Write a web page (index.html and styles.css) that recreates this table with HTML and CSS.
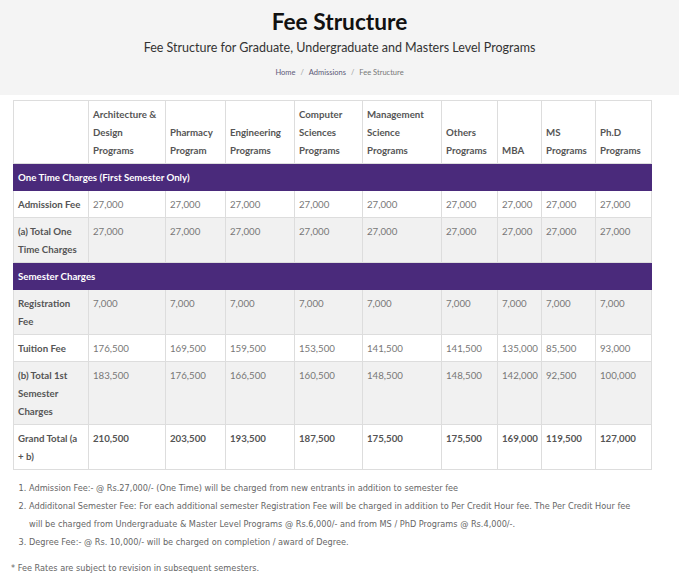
FILE: index.html
```html
<!DOCTYPE html>
<html>
<head>
<meta charset="utf-8">
<link rel="stylesheet" href="styles.css">
</head>
<body>
<header class="hero">
  <h1 class="title">Fee Structure</h1>
  <p class="subtitle">Fee Structure for Graduate, Undergraduate and Masters Level Programs</p>
  <nav class="crumbs"><a>Home</a><span class="sep">/</span><a>Admissions</a><span class="sep">/</span><span class="cur">Fee Structure</span></nav>
</header>
<main class="content">
  <table class="fees">
    <colgroup>
      <col class="c0"><col class="c1"><col class="c2"><col class="c3"><col class="c4"><col class="c5"><col class="c6"><col class="c7"><col class="c8"><col class="c9">
    </colgroup>
    <thead>
      <tr class="head">
        <th></th>
        <th>Architecture &amp; Design Programs</th>
        <th>Pharmacy Program</th>
        <th>Engineering Programs</th>
        <th>Computer Sciences Programs</th>
        <th>Management Science Programs</th>
        <th>Others Programs</th>
        <th>MBA</th>
        <th>MS Programs</th>
        <th>Ph.D Programs</th>
      </tr>
    </thead>
    <tbody>
      <tr class="section"><td colspan="10">One Time Charges (First Semester Only)</td></tr>
      <tr class="white"><th>Admission Fee</th><td>27,000</td><td>27,000</td><td>27,000</td><td>27,000</td><td>27,000</td><td>27,000</td><td>27,000</td><td>27,000</td><td>27,000</td></tr>
      <tr class="grey"><th>(a) Total One Time Charges</th><td>27,000</td><td>27,000</td><td>27,000</td><td>27,000</td><td>27,000</td><td>27,000</td><td>27,000</td><td>27,000</td><td>27,000</td></tr>
      <tr class="section"><td colspan="10">Semester Charges</td></tr>
      <tr class="grey"><th>Registration Fee</th><td>7,000</td><td>7,000</td><td>7,000</td><td>7,000</td><td>7,000</td><td>7,000</td><td>7,000</td><td>7,000</td><td>7,000</td></tr>
      <tr class="white"><th>Tuition Fee</th><td>176,500</td><td>169,500</td><td>159,500</td><td>153,500</td><td>141,500</td><td>141,500</td><td>135,000</td><td>85,500</td><td>93,000</td></tr>
      <tr class="grey"><th>(b) Total 1st Semester Charges</th><td>183,500</td><td>176,500</td><td>166,500</td><td>160,500</td><td>148,500</td><td>148,500</td><td>142,000</td><td>92,500</td><td>100,000</td></tr>
      <tr class="white total"><th>Grand Total (a + b)</th><td>210,500</td><td>203,500</td><td>193,500</td><td>187,500</td><td>175,500</td><td>175,500</td><td>169,000</td><td>119,500</td><td>127,000</td></tr>
    </tbody>
  </table>
  <ol class="notes">
    <li>Admission Fee:- @ Rs.27,000/- (One Time) will be charged from new entrants in addition to semester fee</li>
    <li>Addiditonal Semester Fee: For each additional semester Registration Fee will be charged in addition to Per Credit Hour fee. The Per Credit Hour fee will be charged from Undergraduate &amp; Master Level Programs @ Rs.6,000/- and from MS / PhD Programs @ Rs.4,000/-.</li>
    <li>Degree Fee:- @ Rs. 10,000/- will be charged on completion / award of Degree.</li>
  </ol>
  <p class="foot">* Fee Rates are subject to revision in subsequent semesters.</p>
</main>
</body>
</html>
```
FILE: styles.css
```css
html, body {
  margin: 0;
  padding: 0;
  background: #fff;
}
body {
  font-family: Lato, "Noto Sans", sans-serif;
  color: #666;
}
.hero {
  background: #f4f4f4;
  height: 95px;
  display: flex;
  flex-direction: column;
  align-items: center;
  padding-top: 8px;
  box-sizing: border-box;
}
.title {
  margin: 0;
  font-size: 22.7px;
  line-height: 28px;
  font-weight: 700;
  color: #111;
}
.subtitle {
  margin: 2px 0 0;
  font-size: 12.5px;
  line-height: 20px;
  color: #333;
}
.crumbs {
  margin-top: 9px;
  font-size: 7.5px;
  line-height: 12px;
  color: #777;
}
.crumbs a {
  color: #5c5a78;
}
.crumbs .sep {
  margin: 0 5px;
  color: #999;
}
.content {
  padding: 5px 0 0 13px;
}
.fees {
  table-layout: fixed;
  width: 638px;
  border-collapse: collapse;
  font-size: 9.7px;
  line-height: 18px;
}
.c0 { width: 75px; }
.c1 { width: 77px; }
.c2 { width: 60px; }
.c3 { width: 69px; }
.c4 { width: 68px; }
.c5 { width: 79px; }
.c6 { width: 56px; }
.c7 { width: 44px; }
.c8 { width: 54px; }
.c9 { width: 56px; }
.fees th, .fees td {
  border: 1px solid #ddd;
  padding: 4px 4px;
  text-align: left;
  vertical-align: top;
}
.fees th {
  font-weight: 700;
  color: #555;
}
.fees td {
  color: #777;
}
.head th {
  vertical-align: bottom;
  background: #fff;
}
.section td {
  background: #4a2a7b;
  color: #fff;
  font-weight: 700;
  border-color: #4a2a7b;
}
.grey th, .grey td {
  background: #f1f1f1;
}
.white th, .white td {
  background: #fff;
}
.total td {
  font-weight: 700;
  color: #555;
}
.notes {
  margin: 9px 0 0;
  padding-left: 16px;
  font-family: "Liberation Sans Narrow", "DejaVu Sans Condensed", sans-serif;
  font-size: 9.1px;
  line-height: 18px;
  color: #666;
  width: 612px;
}
.foot {
  margin: 8px 0 0;
  font-family: "Liberation Sans Narrow", "DejaVu Sans Condensed", sans-serif;
  font-size: 9.1px;
  line-height: 18px;
  color: #666;
  margin-left: -2px;
}
```
